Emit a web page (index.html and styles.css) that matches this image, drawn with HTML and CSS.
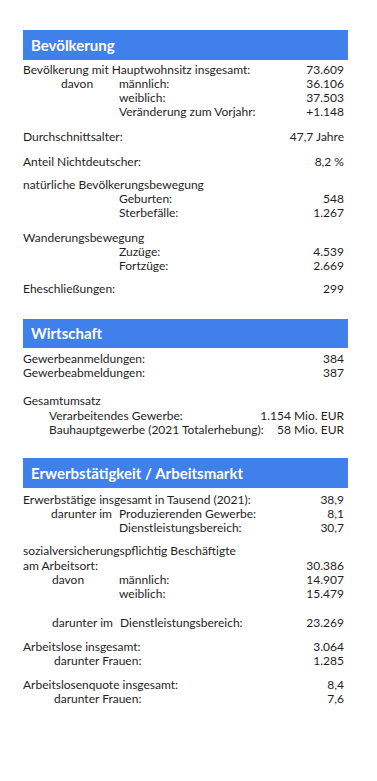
FILE: index.html
```html
<!DOCTYPE html>
<html lang="de">
<head>
<meta charset="utf-8">
<link rel="stylesheet" href="styles.css">
</head>
<body>
<div class="page">
  <section class="sec sec-1">
    <h2 class="head">Bevölkerung</h2>
    <div class="grp g-first">
      <div class="row"><span class="lbl">Bevölkerung mit Hauptwohnsitz insgesamt:</span><span class="val">73.609</span></div>
      <div class="row"><span class="pre p-davon1">davon</span><span class="lbl">männlich:</span><span class="val">36.106</span></div>
      <div class="row"><span class="pre"></span><span class="lbl">weiblich:</span><span class="val">37.503</span></div>
      <div class="row"><span class="pre"></span><span class="lbl">Veränderung zum Vorjahr:</span><span class="val">+1.148</span></div>
    </div>
    <div class="grp g11">
      <div class="row"><span class="lbl">Durchschnittsalter:</span><span class="val">47,7 Jahre</span></div>
    </div>
    <div class="grp g11">
      <div class="row"><span class="lbl">Anteil Nichtdeutscher:</span><span class="val">8,2 %</span></div>
    </div>
    <div class="grp g9">
      <div class="row"><span class="lbl">natürliche Bevölkerungsbewegung</span></div>
      <div class="row"><span class="pre"></span><span class="lbl">Geburten:</span><span class="val">548</span></div>
      <div class="row"><span class="pre"></span><span class="lbl">Sterbefälle:</span><span class="val">1.267</span></div>
    </div>
    <div class="grp g11">
      <div class="row"><span class="lbl">Wanderungsbewegung</span></div>
      <div class="row"><span class="pre"></span><span class="lbl">Zuzüge:</span><span class="val">4.539</span></div>
      <div class="row"><span class="pre"></span><span class="lbl">Fortzüge:</span><span class="val">2.669</span></div>
    </div>
    <div class="grp g9">
      <div class="row"><span class="lbl">Eheschließungen:</span><span class="val">299</span></div>
    </div>
  </section>

  <section class="sec sec-2">
    <h2 class="head">Wirtschaft</h2>
    <div class="grp g-first2">
      <div class="row"><span class="lbl">Gewerbeanmeldungen:</span><span class="val">384</span></div>
      <div class="row"><span class="lbl">Gewerbeabmeldungen:</span><span class="val">387</span></div>
    </div>
    <div class="grp g14">
      <div class="row"><span class="lbl">Gesamtumsatz</span></div>
      <div class="row tall"><span class="lbl ind-verarb">Verarbeitendes Gewerbe:</span><span class="val">1.154 Mio. EUR</span></div>
      <div class="row"><span class="lbl ind-verarb">Bauhauptgewerbe (2021 Totalerhebung):</span><span class="val">58 Mio. EUR</span></div>
    </div>
  </section>

  <section class="sec sec-3">
    <h2 class="head">Erwerbstätigkeit / Arbeitsmarkt</h2>
    <div class="grp g-first3">
      <div class="row"><span class="lbl">Erwerbstätige insgesamt in Tausend (2021):</span><span class="val">38,9</span></div>
      <div class="row"><span class="pre p-dar">darunter im</span><span class="lbl">Produzierenden Gewerbe:</span><span class="val">8,1</span></div>
      <div class="row"><span class="pre"></span><span class="lbl">Dienstleistungsbereich:</span><span class="val">30,7</span></div>
    </div>
    <div class="grp g9">
      <div class="row"><span class="lbl">sozialversicherungspflichtig Beschäftigte</span></div>
      <div class="row tall"><span class="lbl">am Arbeitsort:</span><span class="val">30.386</span></div>
      <div class="row"><span class="pre p-davon2">davon</span><span class="lbl">männlich:</span><span class="val">14.907</span></div>
      <div class="row"><span class="pre"></span><span class="lbl">weiblich:</span><span class="val">15.479</span></div>
    </div>
    <div class="grp g15">
      <div class="row"><span class="pre p-dar2">darunter im</span><span class="lbl">Dienstleistungsbereich:</span><span class="val">23.269</span></div>
    </div>
    <div class="grp g10">
      <div class="row"><span class="lbl">Arbeitslose insgesamt:</span><span class="val">3.064</span></div>
      <div class="row"><span class="lbl ind-fr">darunter Frauen:</span><span class="val">1.285</span></div>
    </div>
    <div class="grp g10">
      <div class="row"><span class="lbl">Arbeitslosenquote insgesamt:</span><span class="val">8,4</span></div>
      <div class="row"><span class="lbl ind-fr">darunter Frauen:</span><span class="val">7,6</span></div>
    </div>
  </section>
</div>
</body>
</html>
```

FILE: styles.css
```css
* { box-sizing: border-box; }
html, body { margin: 0; padding: 0; background: #ffffff; }
body {
  font-family: Lato, "Liberation Sans", sans-serif;
  font-size: 12px;
  color: #1e1e1e;
}
.page {
  padding: 30px 0 40px 23px;
  width: 348px;
}
.sec { display: flex; flex-direction: column; }
.sec-2 { margin-top: 23px; }
.sec-3 { margin-top: 21px; }
.head {
  margin: 0;
  height: 30px;
  background: #3f80ea;
  color: #ffffff;
  font-size: 15px;
  font-weight: 700;
  line-height: 30px;
  padding-left: 8px;
}
.sec-2 .head { height: 29px; line-height: 29px; }
.grp { display: flex; flex-direction: column; }
.g-first { margin-top: 3px; }
.g-first2 { margin-top: 4px; }
.g-first3 { margin-top: 5px; }
.g9 { margin-top: 9px; }
.g10 { margin-top: 10px; }
.g11 { margin-top: 11px; }
.g14 { margin-top: 14px; }
.g15 { margin-top: 15px; }
.row {
  display: flex;
  align-items: baseline;
  line-height: 14px;
  padding-right: 4px;
}
.row.tall { line-height: 15px; }
.lbl { flex: 1; white-space: nowrap; }
.val { white-space: nowrap; text-align: right; }
.pre { width: 96px; flex: none; white-space: nowrap; }
.p-davon1 { padding-left: 38px; }
.p-davon2 { padding-left: 29px; }
.p-dar { padding-left: 28px; }
.p-dar2 { padding-left: 29px; }
.p-dar2 + .lbl { padding-left: 1px; }
.ind-verarb { padding-left: 26px; }
.ind-fr { padding-left: 31px; }
```
